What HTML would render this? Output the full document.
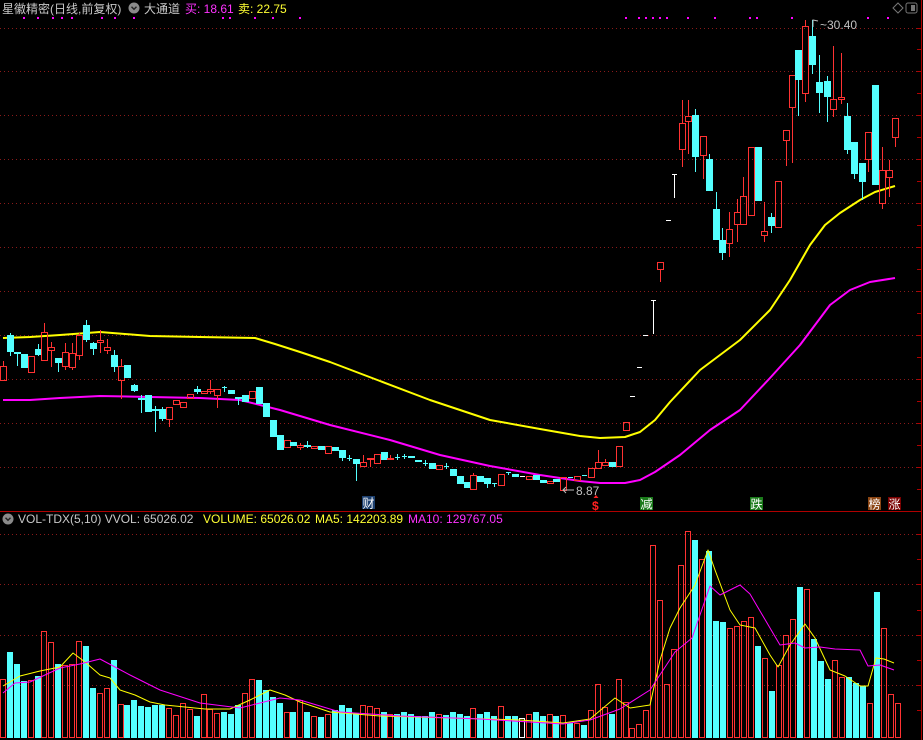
<!DOCTYPE html>
<html><head><meta charset="utf-8"><style>
html,body{margin:0;padding:0;background:#000;width:923px;height:740px;overflow:hidden}
svg{position:absolute;left:0;top:0}
text{font-family:"Liberation Sans","Noto Sans CJK SC",sans-serif;font-size:12px}
</style></head><body>
<svg id="s" width="923" height="740" viewBox="0 0 923 740" xmlns="http://www.w3.org/2000/svg">
<rect width="923" height="740" fill="#000"/>
<g id="grid" stroke="#8a1a1a" stroke-width="1" stroke-dasharray="1,3" shape-rendering="crispEdges"></g>
<line x1="0" y1="511.5" x2="921" y2="511.5" stroke="#b00000" shape-rendering="crispEdges"/>
<line x1="921.5" y1="0" x2="921.5" y2="740" stroke="#b00000" shape-rendering="crispEdges"/>
<g id="ma"></g>
<g id="c" shape-rendering="crispEdges"></g>
<g id="v" shape-rendering="crispEdges"></g>
<g id="vm"></g>
<!-- header -->
<text x="2" y="13" fill="#c8c8c8">星徽精密(日线,前复权)</text>
<circle cx="134" cy="8" r="5.5" fill="#8a8a8a"/>
<path d="M131.5 6.8 L134 9.3 L136.5 6.8" stroke="#222" stroke-width="1.4" fill="none"/>
<text x="144" y="13" fill="#c8c8c8">大通道</text>
<text x="185" y="13" fill="#ff32ff">买: 18.61</text>
<text x="238" y="13" fill="#ffff33">卖: 22.75</text>
<path d="M898 3 L903 8 L898 13 L893 8 Z" stroke="#777" fill="none"/>
<rect x="906" y="3" width="11" height="10" rx="2" stroke="#777" fill="none"/>
<rect x="911" y="5" width="4" height="6" fill="#777"/>
<g id="dots" fill="#ff00ff" shape-rendering="crispEdges"></g>
<!-- labels -->
<path d="M813 27 L813 20 L818 21" stroke="#bbb" fill="none"/>
<text x="820" y="29" fill="#c0c0c0">~30.40</text>
<path d="M574 490 L563 490 M566 487 L563 490 L566 493" stroke="#bbb" fill="none"/>
<text x="576" y="495" fill="#c0c0c0">8.87</text>
<rect x="362" y="496" width="13" height="13" fill="#1c3f6e"/>
<text x="362.5" y="507.5" fill="#fff">财</text>
<path d="M596 495 L598.5 498 L593.5 498 Z" fill="#ff2020"/>
<text x="592" y="510" fill="#ff2020" font-weight="bold">$</text>
<rect x="640" y="497" width="13" height="13" fill="#1a7a1a"/>
<text x="640.5" y="508.5" fill="#fff">减</text>
<rect x="750" y="497" width="13" height="13" fill="#1a7a1a"/>
<text x="750.5" y="508.5" fill="#fff">跌</text>
<rect x="868" y="497" width="13" height="13" fill="#8b4513"/>
<text x="868.5" y="508.5" fill="#fff">榜</text>
<rect x="888" y="497" width="13" height="13" fill="#7a0000"/>
<text x="888.5" y="508.5" fill="#fff">涨</text>
<!-- vol header -->
<circle cx="8" cy="519" r="5.5" fill="#8a8a8a"/>
<path d="M5.5 517.8 L8 520.3 L10.5 517.8" stroke="#222" stroke-width="1.4" fill="none"/>
<text x="18" y="523" fill="#c8c8c8">VOL-TDX(5,10) VVOL: 65026.02</text>
<text x="203" y="523" fill="#ffff33">VOLUME: 65026.02</text>
<text x="315" y="523" fill="#ffff33">MA5: 142203.89</text>
<text x="408" y="523" fill="#ff32ff">MA10: 129767.05</text>
</svg>
<script>
var NS="http://www.w3.org/2000/svg";
function el(p,t,a){var e=document.createElementNS(NS,t);for(var k in a)e.setAttribute(k,a[k]);p.appendChild(e);return e;}
var g=document.getElementById('grid');
[28,71,115,159,203,247,291,335,379,423,467,534,584,635,685].forEach(function(y){el(g,'line',{x1:0,y1:y+.5,x2:920,y2:y+.5});});
var s=document.getElementById('s');
[28,49,71,93,115,137,159,181,203,225,247,269,291,313,335,357,379,401,423,445,467,489,534,559,584,610,635,660,685,710].forEach(function(y){el(s,'line',{x1:917,y1:y+.5,x2:921,y2:y+.5,stroke:'#b00000','shape-rendering':'crispEdges'});});
var d=document.getElementById('dots');
[24,38,53,62,72,102,115,134,223,230,255,273,300,626,639,646,653,660,667,688,715,750,757,792,868,888].forEach(function(x){el(d,'rect',{x:x-1,y:17,width:2,height:2});});
var C=[
[3,366,380,361,380,'r'],[10,335,352,333,356,'c'],[17,352,354,352,366,'c'],[24,354,368,0,0,'c'],[31,356,372,0,0,'r'],[38,349,355,344,356,'c'],[44,332,360,323,361,'r'],[51,347,350,342,367,'r'],[58,358,363,358,372,'c'],[65,352,366,343,370,'r'],[72,353,367,343,370,'r'],[79,335,355,333,360,'r'],[86,325,340,320,342,'c'],[93,343,349,342,355,'c'],[100,340,342,330,353,'r'],[107,347,350,339,354,'r'],[114,355,367,350,372,'c'],[121,366,380,359,399,'r'],[127,365,378,0,0,'c'],[134,385,391,384,392,'c'],[141,398,400,395,413,'c'],[148,395,412,0,0,'c'],[155,409,411,406,432,'c'],[162,409,419,407,421,'c'],[169,407,419,0,427,'r'],[176,400,404,0,0,'r'],[183,402,407,0,0,'r'],[190,394,398,0,0,'r'],[197,389,392,386,394,'c'],[204,391,393,0,0,'r'],[210,389,391,380,394,'r'],[217,389,395,0,408,'r'],[224,387,388,386,392,'c'],[231,390,394,0,0,'c'],[238,397,399,397,405,'c'],[245,395,402,0,0,'c'],[252,391,398,0,0,'r'],[259,387,404,0,0,'c'],[266,403,417,0,0,'c'],[273,420,437,0,0,'c'],[280,435,450,0,0,'c'],[287,440,447,0,0,'r'],
[293,442,446,0,0,'c'],[300,445,447,443,450,'r'],[307,445,447,441,448,'c'],[314,446,448,0,0,'r'],[321,446,450,0,0,'c'],[328,446,453,0,0,'r'],[335,447,451,0,0,'c'],[342,450,458,0,461,'c'],[349,458,459,455,461,'c'],[356,459,464,0,481,'c'],[363,462,466,455,0,'r'],[370,458,459,0,467,'r'],[377,454,463,0,0,'r'],[384,452,460,0,0,'c'],[390,458,459,455,460,'r'],[397,457,458,454,460,'c'],[404,456,457,454,459,'c'],[411,456,458,0,0,'c'],[418,460,462,0,0,'c'],[425,463,464,460,466,'c'],[432,463,469,0,0,'c'],[439,465,469,0,0,'r'],[446,466,467,463,469,'c'],[453,469,476,0,0,'c'],[460,476,484,0,0,'c'],[467,482,488,0,0,'c'],[473,475,489,473,0,'r'],[480,476,482,0,0,'c'],[487,478,484,0,488,'c'],[494,483,484,0,487,'c'],[501,474,485,0,0,'r'],[508,472,473,0,475,'c'],[515,474,477,0,0,'c'],[522,476,477,0,0,'w'],[529,476,479,0,0,'r'],[536,475,480,0,0,'c'],[543,480,483,0,0,'c'],[550,481,483,0,0,'r'],[556,479,482,0,0,'c'],[563,477,490,0,0,'r'],[570,477,478,0,0,'c'],[577,476,480,0,0,'r'],[584,475,476,0,0,'c'],[591,468,477,0,0,'r'],[598,462,468,450,0,'r'],[605,462,465,459,0,'r'],[612,462,467,0,0,'c'],[619,446,466,0,0,'r'],[626,422,430,0,0,'r'],
[632,396,397,0,0,'w'],[639,367,368,0,0,'w'],[645,335,336,0,0,'w'],[653,300,301,0,334,'w'],[660,262,269,0,282,'r'],[668,220,221,0,0,'w'],[674,174,175,0,198,'w'],
[682,123,149,100,167,'r'],[688,116,121,100,154,'r'],[695,115,157,109,172,'c'],[703,136,155,0,179,'r'],[709,159,191,154,0,'c'],[716,209,240,192,0,'c'],[722,240,253,228,260,'c'],[729,229,243,212,257,'r'],[737,212,224,199,242,'r'],[743,196,224,177,0,'r'],[751,147,215,0,0,'r'],[758,147,201,0,0,'c'],[764,231,235,202,242,'r'],[771,217,226,213,233,'c'],[778,181,227,0,0,'r'],[786,130,140,0,166,'r'],[792,75,107,0,163,'r'],[798,50,80,0,116,'c'],[805,26,93,20,102,'r'],[812,36,65,20,74,'c'],[819,82,93,55,113,'c'],[827,81,97,76,122,'c'],[833,99,109,46,117,'r'],[841,97,99,53,104,'r'],[847,116,150,103,154,'c'],[854,142,174,0,179,'c'],[862,163,182,0,200,'c'],[868,132,159,0,172,'r'],[875,85,185,0,0,'c'],[882,170,203,147,209,'r'],[889,170,177,160,197,'r'],[895,118,137,0,147,'r']];
var cg=document.getElementById('c');
var col={r:'#ff3232',c:'#54ffff',w:'#ffffff'};
C.forEach(function(k){var x=k[0],t=k[1],b=k[2],wt=k[3]||t,wb=k[4]||b,c=col[k[5]];
 if(wt<t)el(cg,'rect',{x:x,y:wt,width:1,height:t-wt,fill:c});
 if(wb>b)el(cg,'rect',{x:x,y:b,width:1,height:wb-b,fill:c});
 if(k[5]=='r')el(cg,'rect',{x:x-2.5,y:t+.5,width:6,height:Math.max(b-t,1),fill:'none',stroke:c,'stroke-width':1});
 else if(b-t<=1)el(cg,'rect',{x:x-2,y:t,width:5,height:1,fill:c});
 else el(cg,'rect',{x:x-3,y:t,width:7,height:b-t,fill:c});
});
var mg=document.getElementById('ma');
function pl(p,pts,c,w){el(p,'polyline',{points:pts.map(function(a){return a.join(',')}).join(' '),fill:'none',stroke:c,'stroke-width':w,'stroke-linejoin':'round'});}
pl(mg,[[3,338],[30,337],[60,335],[100,332],[150,336],[200,337],[255,338],[275,344],[300,352],[330,362],[380,381],[430,400],[490,420],[540,429],[580,436],[600,438],[625,437],[640,432],[655,420],[670,402],[700,370],[740,340],[770,310],[790,280],[810,245],[825,225],[840,213],[860,200],[875,192],[895,186]],'#ffff00',2);
pl(mg,[[3,400],[30,400],[60,398],[100,396],[150,397],[200,398],[240,400],[280,410],[330,425],[390,440],[440,455],[490,466],[540,475],[580,481],[600,483],[625,483],[640,480],[655,472],[680,455],[710,430],[740,410],[770,378],[800,345],[830,305],[850,290],[870,282],[895,278]],'#ff00ff',2);
var V=[[3,679,'r'],[10,652,'c'],[17,664,'c'],[24,681,'c'],[31,680,'r'],[38,676,'c'],[44,631,'r'],[51,642,'r'],[58,664,'c'],[65,665,'r'],[72,664,'r'],[79,641,'r'],[86,646,'c'],[93,688,'c'],[100,693,'r'],[107,688,'r'],[114,660,'c'],[121,704,'r'],[127,705,'c'],[134,700,'c'],[141,706,'c'],[148,707,'c'],[155,705,'c'],[162,705,'c'],[169,708,'r'],[176,715,'r'],[183,703,'r'],[190,709,'r'],[197,716,'c'],[204,694,'r'],[210,709,'r'],[217,713,'r'],[224,712,'c'],[231,714,'c'],[238,705,'c'],[245,693,'r'],[252,679,'r'],[259,680,'c'],[266,690,'c'],[273,697,'c'],[280,703,'c'],[287,712,'r'],
[293,712,'c'],[300,700,'r'],[307,712,'c'],[314,716,'r'],[321,717,'c'],[328,714,'r'],[335,710,'c'],[342,705,'c'],[349,708,'c'],[356,713,'c'],[363,705,'r'],[370,706,'r'],[377,708,'r'],[384,712,'c'],[390,714,'r'],[397,714,'c'],[404,712,'c'],[411,714,'c'],[418,716,'c'],[425,716,'c'],[432,712,'c'],[439,714,'r'],[446,715,'c'],[453,712,'c'],[460,714,'c'],[467,716,'c'],[473,708,'r'],[480,714,'c'],[487,712,'c'],[494,716,'c'],[501,706,'r'],[508,716,'c'],[515,716,'c'],[522,718,'w'],[529,714,'r'],[536,712,'c'],[543,716,'c'],[550,714,'r'],[556,716,'c'],
[563,715,'r'],[570,723,'c'],[577,723,'r'],[584,725,'c'],[591,710,'r'],[598,684,'r'],[605,707,'r'],[612,714,'c'],[619,679,'r'],[626,702,'r'],[632,728,'r'],[639,724,'r'],[646,710,'r'],[653,545,'r'],[660,600,'r'],[667,684,'r'],[674,649,'r'],[681,565,'r'],[688,531,'r'],[695,540,'c'],[702,559,'r'],[709,551,'c'],[716,621,'c'],[723,622,'c'],[730,628,'r'],[737,626,'r'],[744,621,'r'],[751,617,'r'],[758,646,'c'],[765,658,'r'],[772,691,'c'],[779,665,'r'],[786,635,'r'],[793,619,'r'],[800,587,'c'],[807,589,'r'],[814,639,'c'],[821,661,'c'],[828,679,'c'],[835,660,'r'],[842,677,'r'],[849,677,'c'],[856,683,'c'],[863,686,'c'],[870,703,'r'],[877,592,'c'],[884,628,'r'],[891,694,'r'],[898,703,'r']];
var vg=document.getElementById('v');
V.forEach(function(k){var x=k[0],t=k[1],c=col[k[2]];
 if(k[2]=='c')el(vg,'rect',{x:x-3,y:t,width:6,height:738-t,fill:c});
 else el(vg,'rect',{x:x-2.5,y:t+.5,width:5,height:737-t,fill:'none',stroke:c,'stroke-width':1});
});
var vm=document.getElementById('vm');
pl(vm,[[3,686],[20,676],[40,671],[60,667],[73,653],[85,662],[100,675],[110,678],[120,690],[135,695],[150,702],[165,705],[185,707],[205,709],[230,709],[250,700],[270,690],[285,695],[300,702],[330,712],[380,716],[450,718],[520,720],[563,723],[590,719],[615,698],[630,708],[650,705],[660,660],[670,628],[680,608],[695,585],[708,550],[715,570],[730,610],[740,625],[755,628],[770,655],[778,667],[790,645],[805,624],[815,638],[830,670],[845,676],[860,686],[868,686],[876,658],[884,659],[894,663]],'#ffff00',1);
pl(vm,[[3,693],[15,683],[30,682],[60,668],[80,664],[100,659],[115,667],[130,675],[160,690],[200,703],[240,708],[280,698],[300,700],[340,712],[400,716],[480,719],[563,724],[590,720],[620,709],[650,690],[675,652],[692,638],[710,586],[720,595],[740,585],[750,594],[770,628],[780,645],[795,643],[805,648],[820,647],[835,649],[860,650],[868,666],[880,665],[894,670]],'#ff00ff',1);
</script>
</body></html>
